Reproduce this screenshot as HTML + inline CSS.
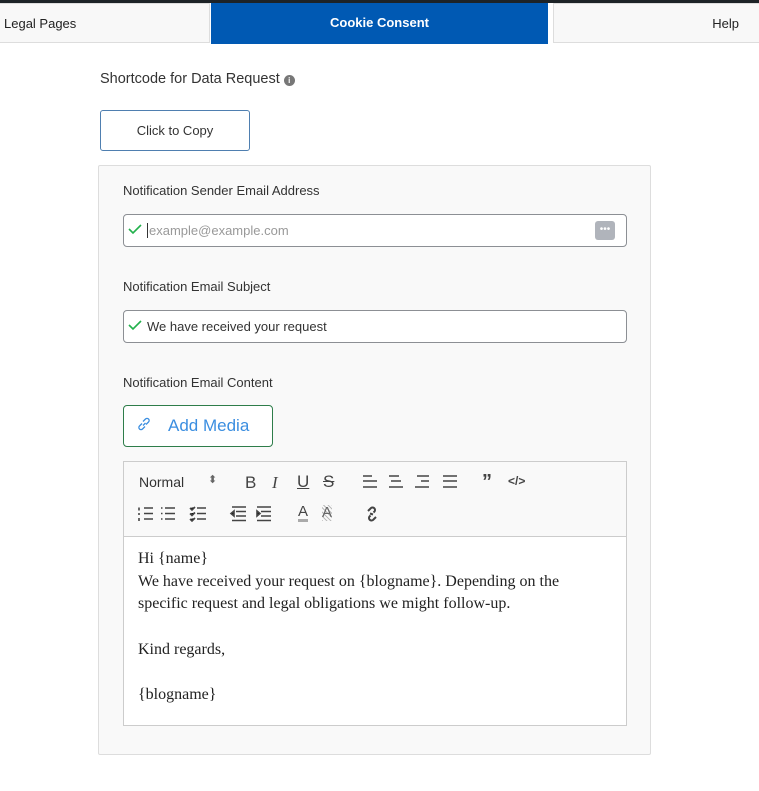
<!DOCTYPE html>
<html><head><meta charset="utf-8"><style>
*{box-sizing:border-box;margin:0;padding:0}
body{width:759px;height:791px;background:#fff;font-family:"Liberation Sans",sans-serif;position:relative;overflow:hidden;color:#333}
.a{position:absolute}
.tab{position:absolute;top:3px;height:40px;background:#f8f8f8;border:1px solid #ddd;font-size:13px;line-height:40px;color:#222}
.lbl{position:absolute;left:123px;font-size:13px;color:#333}
.inp{position:absolute;left:123px;width:504px;height:33px;border:1px solid #8c8f94;border-radius:4px;background:#fff;font-size:13px;line-height:31px}
.chk{position:absolute;left:4px;top:8px}
.tb{position:absolute;font-size:15px;color:#444}
.ser{font-family:"Liberation Serif",serif;font-size:16px;color:#222;line-height:22.7px}
</style></head><body>
<div class="a" style="left:0;top:0;width:759px;height:3px;background:#1d2327"></div>
<div class="tab" style="left:-2px;width:212px;padding-left:5px">Legal Pages</div>
<div class="a" style="left:211px;top:3px;width:337px;height:41px;background:#0059b3;color:#fff;font-weight:bold;font-size:13px;text-align:center;line-height:40px">Cookie Consent</div>
<div class="tab" style="left:553px;width:210px;text-align:right;padding-right:23px">Help</div>

<div class="a" style="left:100px;top:71px;font-size:14.5px;color:#333">Shortcode for Data Request <span style="display:inline-block;width:11px;height:11px;border-radius:50%;background:#777;color:#fff;font-size:8px;line-height:11px;text-align:center;vertical-align:0px;font-weight:bold">i</span></div>
<div class="a" style="left:100px;top:110px;width:150px;height:41px;border:1px solid #4f7fb0;border-radius:3px;font-size:13px;line-height:39px;text-align:center;color:#333">Click to Copy</div>

<div class="a" style="left:98px;top:165px;width:553px;height:590px;background:#f9f9f9;border:1px solid #ddd;border-radius:2px"></div>

<div class="lbl" style="top:183px">Notification Sender Email Address</div>
<div class="inp" style="top:214px"><svg class="chk" width="14" height="12" viewBox="0 0 14 12"><path d="M1 6l4 4 8-8" stroke="#22b14c" stroke-width="1.6" fill="none"/></svg><span style="position:absolute;left:23px;color:#999"><span style="border-left:1px solid #333;margin-right:1px"></span>example@example.com</span><div class="a" style="left:471px;top:6px;width:20px;height:19px;background:#b0b4bb;border-radius:3px;color:#fff;font-size:10px;line-height:17px;text-align:center">•••</div></div>

<div class="lbl" style="top:279px">Notification Email Subject</div>
<div class="inp" style="top:310px"><svg class="chk" width="14" height="12" viewBox="0 0 14 12"><path d="M1 6l4 4 8-8" stroke="#22b14c" stroke-width="1.6" fill="none"/></svg><span style="position:absolute;left:23px;color:#333">We have received your request</span></div>

<div class="lbl" style="top:375px">Notification Email Content</div>
<div class="a" style="left:123px;top:405px;width:150px;height:42px;border:1px solid #2e7d4a;border-radius:4px;background:#fff">
<svg class="a" style="left:12px;top:10px" width="16" height="16" viewBox="0 0 16 16"><path d="M7 9.5l2.5-2.5M6 7.5L3.5 10a2 2 0 003 3L9 10.5M10 8.5L12.5 6a2 2 0 00-3-3L7 5.5" stroke="#3b8ee0" stroke-width="1.3" fill="none"/></svg>
<span class="a" style="left:44px;top:10px;font-size:17px;color:#3b8ee0">Add Media</span></div>

<div class="a" style="left:123px;top:461px;width:504px;height:265px;border:1px solid #ccc;background:#fff"></div>
<div class="a" style="left:124px;top:462px;width:502px;height:75px;background:#f9f9f9;border-bottom:1px solid #ccc"></div>
<div class="tb" style="left:139px;top:474px;font-size:14px;color:#333">Normal</div>
<div class="tb" style="left:208px;top:473px;font-size:11px;color:#666">⬍</div>
<div class="tb" style="left:245px;top:473px;font-size:17px">B</div>
<div class="tb" style="left:272px;top:473px;font-size:17px;font-style:italic;font-family:'Liberation Serif',serif">I</div>
<div class="tb" style="left:297px;top:472px;font-size:17px;text-decoration:underline">U</div>
<div class="tb" style="left:323px;top:472px;font-size:17px;text-decoration:line-through">S</div>
<svg class="a" style="left:362px;top:474px" width="100" height="16" viewBox="0 0 100 16" stroke="#444" stroke-width="1.6"><path d="M1 2h9M1 7h14M1 13h14M27 2h10M29 7h10M27 13h14M55 2h12M59 7h8M53 13h14M81 2h14M81 7h14M81 13h14"/></svg>
<div class="tb" style="left:482px;top:472px;font-size:20px;font-weight:bold;line-height:20px">”</div>
<div class="tb" style="left:508px;top:474px;font-size:12px;font-weight:bold">&lt;/&gt;</div>
<svg class="a" style="left:138px;top:506px" width="140" height="16" viewBox="0 0 140 16" stroke="#444" stroke-width="1.6"><path d="M6 2h9M6 7.5h9M6 13h9M1 1.5v3M1 7v2M1 12v3"/><path d="M27 2h10M27 7.5h10M27 13h10M23 2h1.5M23 7.5h1.5M23 13h1.5"/><path d="M59 2h9M59 7.5h9M59 13h9M52 2l2 2 3-3M52 7.5l2 2 3-3M52 13l2 2 3-3"/><path d="M94 1h14M98 5.5h10M98 10h10M94 14.5h14M93 7.5l3-2.5v5z"/><path d="M119 1h14M123 5.5h10M123 10h10M119 14.5h14M122 7.5l-3-2.5v5z"/></svg>
<div class="tb" style="left:298px;top:505px;font-size:15px;border-bottom:3px solid #aaa;line-height:14px">A</div>
<div class="tb" style="left:322px;top:505px;font-size:15px;color:#666;background:repeating-linear-gradient(45deg,#bbb 0 1px,transparent 1px 3px);line-height:16px">A</div>
<svg class="a" style="left:364px;top:506px" width="16" height="16" viewBox="0 0 16 16"><path d="M6 7.5l3 1M4 5l3-3a2.5 2.5 0 013.5 3.5l-1 1M12 11l-3 3a2.5 2.5 0 01-3.5-3.5l1-1" stroke="#444" stroke-width="2" fill="none"/></svg>

<div class="a ser" style="left:138px;top:548px">Hi {name}<br>We have received your request on {blogname}. Depending on the<br>specific request and legal obligations we might follow-up.<br><br>Kind regards,<br><br>{blogname}</div>
</body></html>
